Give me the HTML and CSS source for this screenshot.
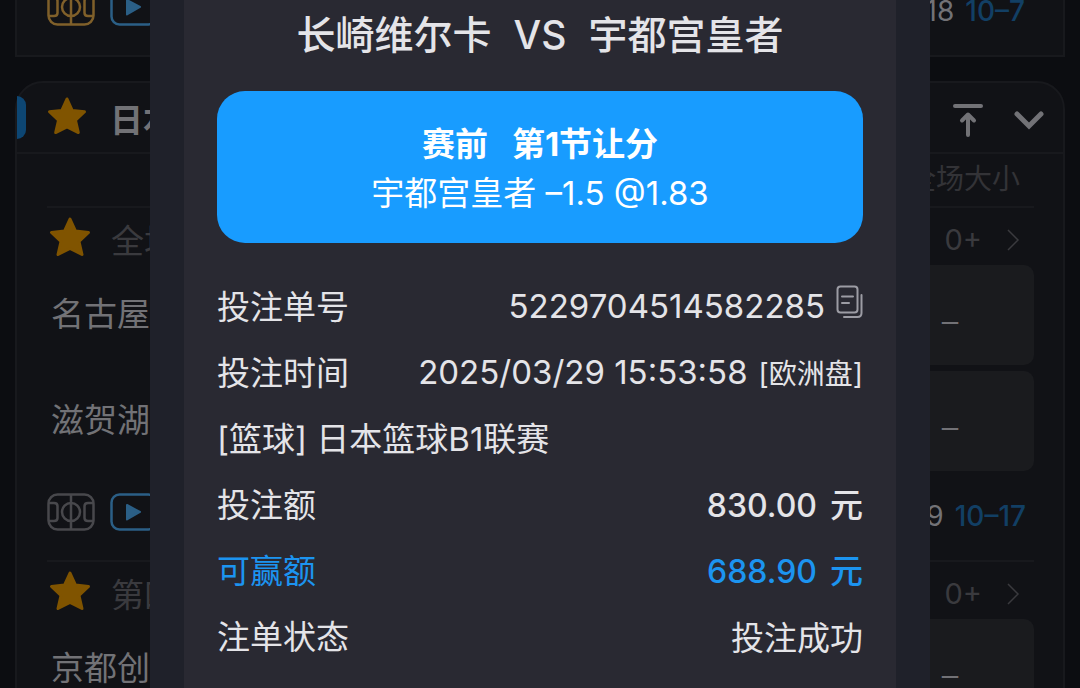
FILE: index.html
```
<!DOCTYPE html>
<html lang="zh-CN">
<head>
    <meta charset="UTF-8">
    <meta name="viewport" content="width=device-width, initial-scale=1.0">
    <title>注单详情</title>
    <link rel="stylesheet" href="styles.css">
</head>
<body>
    <!-- shared icons -->
    <svg class="sprite" aria-hidden="true">
        <symbol id="star" viewBox="0 0 42 40">
            <path d="M21 2 L26.500 14 L39.500 15.500 L30 24.500 L33 37.500 L21 31.500 L9 37.500 L12 24.500 L2.500 15.500 L15.500 14 Z" fill="currentColor" stroke="currentColor" stroke-width="3" stroke-linejoin="round"/>
        </symbol>
        <symbol id="court" viewBox="0 0 48 38">
            <g fill="none" stroke="currentColor" stroke-width="2.500">
                <rect x="1.500" y="1.500" width="45" height="35" rx="9"/>
                <path d="M24 1.500 V36.500 M1 10 H7 Q10.500 10 10.500 13 V25 Q10.500 28 7 28 H1 M47 10 H41 Q37.500 10 37.500 13 V25 Q37.500 28 41 28 H47"/>
                <circle cx="24" cy="19" r="9"/>
            </g>
        </symbol>
        <symbol id="play" viewBox="0 0 48 38">
            <rect x="1.500" y="1.500" width="45" height="35" rx="8" fill="none" stroke="currentColor" stroke-width="2.500"/>
            <path d="M17 12 L30 19 L17 26.500 Z" fill="currentColor" stroke="currentColor" stroke-width="2" stroke-linejoin="round"/>
        </symbol>
        <symbol id="next" viewBox="0 0 14 24">
            <path d="M2 2 L12 12 L2 22" fill="none" stroke="currentColor" stroke-width="1.500"/>
        </symbol>
    </svg>

    <main class="page">
        <section class="card card-prev">
            <div class="score-row">
                <svg class="icon gold"><use href="#court"/></svg>
                <svg class="icon blue"><use href="#play"/></svg>
                <span class="score">18 <b>10–7</b></span>
            </div>
        </section>

        <section class="card">
            <header class="league">
                <span class="tab"></span>
                <svg class="star small"><use href="#star"/></svg>
                <h2>日本</h2>
                <button class="tool" aria-label="置顶">
                    <svg width="32" height="36" viewBox="0 0 32 36" fill="none" stroke="currentColor" stroke-width="4" stroke-linecap="round" stroke-linejoin="round">
                        <path d="M3 4 H29"/>
                        <path d="M16 33 V13 M10 18.500 L16 12.500 L22 18.500"/>
                    </svg>
                </button>
                <button class="tool" aria-label="收起">
                    <svg width="32" height="20" viewBox="0 0 32 20" fill="none" stroke="currentColor" stroke-width="5" stroke-linecap="round">
                        <path d="M4 4 L16 16 L28 4"/>
                    </svg>
                </button>
            </header>
            <div class="market">全场大小</div>

            <article class="match">
                <div class="match-head">
                    <svg class="star"><use href="#star"/></svg>
                    <span>全场</span>
                    <a href="#more">0+ <svg class="next"><use href="#next"/></svg></a>
                </div>
                <div class="team"><span>名古屋</span><button class="odds">–</button></div>
                <div class="team"><span>滋贺湖</span><button class="odds">–</button></div>
                <div class="score-row">
                    <svg class="icon"><use href="#court"/></svg>
                    <svg class="icon blue"><use href="#play"/></svg>
                    <span class="score">9 <b>10–17</b></span>
                </div>
            </article>

            <article class="match">
                <div class="match-head">
                    <svg class="star"><use href="#star"/></svg>
                    <span>第四</span>
                    <a href="#more">0+ <svg class="next"><use href="#next"/></svg></a>
                </div>
                <div class="team"><span>京都创</span><button class="odds">–</button></div>
            </article>
        </section>
    </main>

    <div class="modal" role="dialog" aria-labelledby="title">
        <div class="slip">
            <h1 id="title"><span>长崎维尔卡</span><span>VS</span><span>宇都宫皇者</span></h1>
            <div class="pick">
                <strong><span>赛前</span><span>第1节让分</span></strong>
                <p>宇都宫皇者 –1.5 @1.83</p>
            </div>
            <dl class="details">
                <div>
                    <dt>投注单号</dt>
                    <dd>5229704514582285
                        <button class="copy" aria-label="复制">
                            <svg width="27" height="34" viewBox="0 0 27 34" fill="none" stroke="currentColor" stroke-width="2" stroke-linecap="round">
                                <rect x="1.500" y="1.500" width="20" height="26" rx="3"/>
                                <path d="M6 11.500 H17 M6 18 H13"/>
                                <path d="M25.500 10 V28 Q25.500 32 21.500 32 H8"/>
                            </svg>
                        </button>
                    </dd>
                </div>
                <div><dt>投注时间</dt><dd>2025/03/29 15:53:58 <small>[欧洲盘]</small></dd></div>
                <div><dt>[篮球] 日本篮球B1联赛</dt></div>
                <div><dt>投注额</dt><dd class="money"><b>830.00</b> 元</dd></div>
                <div class="win"><dt>可赢额</dt><dd class="money"><b>688.90</b> 元</dd></div>
                <div><dt>注单状态</dt><dd>投注成功</dd></div>
            </dl>
        </div>
    </div>
</body>
</html>
```

FILE: styles.css
```
* {
    box-sizing: border-box;
}

body {
    margin: 0;
    height: 100vh;
    overflow: hidden;
    position: relative;
    background-color: #0c0d11;
    color: #727276;
    font-family: Inter, "Noto Sans CJK SC", sans-serif;
    font-size: 33px;
}

h1, h2, p, dl, dd {
    margin: 0;
}

button {
    border: none;
    padding: 0;
    background: none;
    color: inherit;
    font: inherit;
    cursor: pointer;
}

svg {
    display: block;
    flex: none;
}

.sprite {
    position: absolute;
    width: 0;
    height: 0;
}

/* match list */
.page {
    height: 100%;
    overflow: hidden;
    padding: 0 15px;
}

.card {
    border: 2px solid #18191d;
    border-radius: 28px 28px 0 0;
    background-color: #111216;
}

.card-prev {
    border-top: none;
    border-radius: 0;
    margin-bottom: 24px;
    padding: 0 30px;
}

.score-row {
    display: flex;
    align-items: center;
    gap: 15px;
    height: 83px;
    padding-right: 8px;
    padding-bottom: 14px;
}

.card-prev .score-row {
    height: 55px;
    padding-bottom: 42px;
}

.icon {
    width: 48px;
    height: 38px;
    color: #48484c;
}

.gold {
    color: #80602a;
}

.blue {
    color: #2b5f86;
}

.score {
    display: flex;
    gap: 11px;
    margin-left: auto;
    margin-top: 8px;
    font-size: 28px;
    line-height: 28px;
}

.score b {
    color: #123f64;
    font-weight: 500;
}

.league {
    display: flex;
    align-items: center;
    height: 71px;
    padding-right: 18px;
    border-bottom: 2px solid #18191d;
}

.tab {
    width: 9px;
    height: 43px;
    border-radius: 0 9px 9px 0;
    background-color: #0d4673;
}

.star {
    width: 42px;
    height: 40px;
    color: #805400;
}

.small {
    width: 40px;
    height: 38px;
    margin-left: 21px;
    margin-bottom: 4px;
}

.league h2 {
    flex: 1;
    margin-left: 23px;
    font-size: 33px;
    font-weight: 700;
}

.tool {
    margin-left: 29px;
    padding-top: 4px;
}

.market {
    height: 52px;
    padding-right: 43px;
    color: #333337;
    font-size: 28px;
    line-height: 50px;
    text-align: right;
}

.match {
    margin: 0 29px 0 30px;
    border-top: 2px solid #18191d;
}

.match-head {
    display: flex;
    align-items: center;
    height: 57px;
    padding-right: 14px;
    color: #3a3a3e;
}

.match-head .star {
    margin-left: 2px;
}

.match-head span {
    margin-left: 20px;
    margin-top: 4px;
}

.match-head a {
    display: flex;
    align-items: center;
    gap: 24px;
    margin-left: auto;
    margin-top: 6px;
    color: inherit;
    font-size: 29px;
    text-decoration: none;
}

.next {
    width: 14px;
    height: 24px;
}

.team {
    display: flex;
    justify-content: space-between;
    align-items: center;
    margin-bottom: 6px;
    padding-left: 4px;
}

.team span {
    padding-bottom: 6px;
}

.odds {
    width: 168px;
    height: 100px;
    border-radius: 10px;
    background-color: #1a1b1e;
    padding-top: 12px;
    font-weight: 300;
}

/* bet slip */
.modal {
    position: absolute;
    top: 0;
    right: 150px;
    bottom: 0;
    left: 150px;
    padding: 0 34px;
    background-color: #1f212a;
    color: #e4e4e8;
    overflow: hidden;
}

.slip {
    min-height: 100%;
    padding: 8px 33px 0;
    background-color: #292932;
}

.slip h1 {
    display: flex;
    justify-content: center;
    gap: 22px;
    margin-bottom: 29px;
    font-size: 39px;
    font-weight: 500;
    line-height: 54px;
    white-space: nowrap;
}

.pick {
    padding: 29px 20px 25px;
    border-radius: 28px;
    background-color: #189cff;
    color: #fff;
    line-height: 49px;
    text-align: center;
}

.pick strong {
    display: flex;
    justify-content: center;
    gap: 24px;
}

.details {
    padding-top: 30px;
}

.details div {
    display: flex;
    justify-content: space-between;
    align-items: center;
    height: 66px;
    white-space: nowrap;
}

.details dt {
    padding-bottom: 3px;
}

.details dd {
    display: flex;
    align-items: center;
    gap: 11px;
}

.details small {
    font-size: 28px;
}

.copy {
    padding-bottom: 8px;
    color: #9c9ca4;
}

.details .money {
    align-items: baseline;
    gap: 13px;
    padding-bottom: 3px;
    font-weight: 500;
}

.money b {
    font-size: 32px;
    font-weight: 500;
}

.details .win {
    color: #1c94f0;
}
```
